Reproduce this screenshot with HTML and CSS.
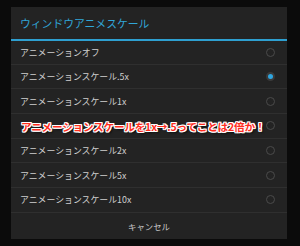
FILE: index.html
```html
<!DOCTYPE html>
<html lang="ja">
<head>
<meta charset="utf-8">
<link rel="stylesheet" href="styles.css">
</head>
<body>
<div class="dialog">
  <div class="title">ウィンドウアニメスケール</div>
  <ul class="options">
    <li class="opt"><span>アニメーションオフ</span><i class="radio"></i></li>
    <li class="opt"><span>アニメーションスケール.5x</span><i class="radio on"></i></li>
    <li class="opt"><span>アニメーションスケール1x</span><i class="radio"></i></li>
    <li class="opt"><span class="caption">アニメーションスケールを1x→.5ってことは2倍か！</span><i class="radio"></i></li>
    <li class="opt"><span>アニメーションスケール2x</span><i class="radio"></i></li>
    <li class="opt"><span>アニメーションスケール5x</span><i class="radio"></i></li>
    <li class="opt"><span>アニメーションスケール10x</span><i class="radio"></i></li>
  </ul>
  <div class="cancel">キャンセル</div>
</div>
</body>
</html>
```
FILE: styles.css
```css
html, body { margin: 0; padding: 0; }
body {
  background: #0b0b0b;
  width: 300px;
  height: 246px;
  overflow: hidden;
  font-family: "Noto Sans CJK JP", "Noto Sans", sans-serif;
}
.dialog {
  margin: 7px 0 0 11px;
  width: 276px;
  background: #232323;
}
.title {
  height: 32px;
  line-height: 32px;
  padding-left: 9px;
  font-size: 10.8px;
  color: #31a6d8;
  border-bottom: 2px solid #2e9fd0;
}
.options { list-style: none; margin: 0; padding: 0; }
.opt {
  display: flex;
  align-items: center;
  justify-content: space-between;
  height: 23.7px;
  padding: 0 12px 0 9px;
  border-bottom: 1px solid #2f2f2f;
  font-size: 8.9px;
  color: #cfcfcf;
}
.opt:first-child { height: 22.7px; }
.radio {
  width: 7px;
  height: 7px;
  border: 1px solid #4a4a4a;
  border-radius: 50%;
  box-sizing: content-box;
}
.radio.on {
  width: 5px;
  height: 5px;
  border: 2px solid #3a3a3a;
  background: #2fa6e0;
}
.cancel {
  height: 26px;
  line-height: 26px;
  text-align: center;
  font-size: 8.4px;
  color: #cacaca;
}
.caption {
  margin-left: 1px;
  margin-top: 1px;
  font-size: 10.6px;
  font-weight: bold;
  color: #ff2d1e;
  letter-spacing: -0.2px;
  white-space: nowrap;
  text-shadow:
    1px 0 0 #fff, -1px 0 0 #fff, 0 1px 0 #fff, 0 -1px 0 #fff,
    1px 1px 0 #fff, -1px -1px 0 #fff, 1px -1px 0 #fff, -1px 1px 0 #fff,
    2px 2px 2px rgba(0,0,0,0.7);
}
```
